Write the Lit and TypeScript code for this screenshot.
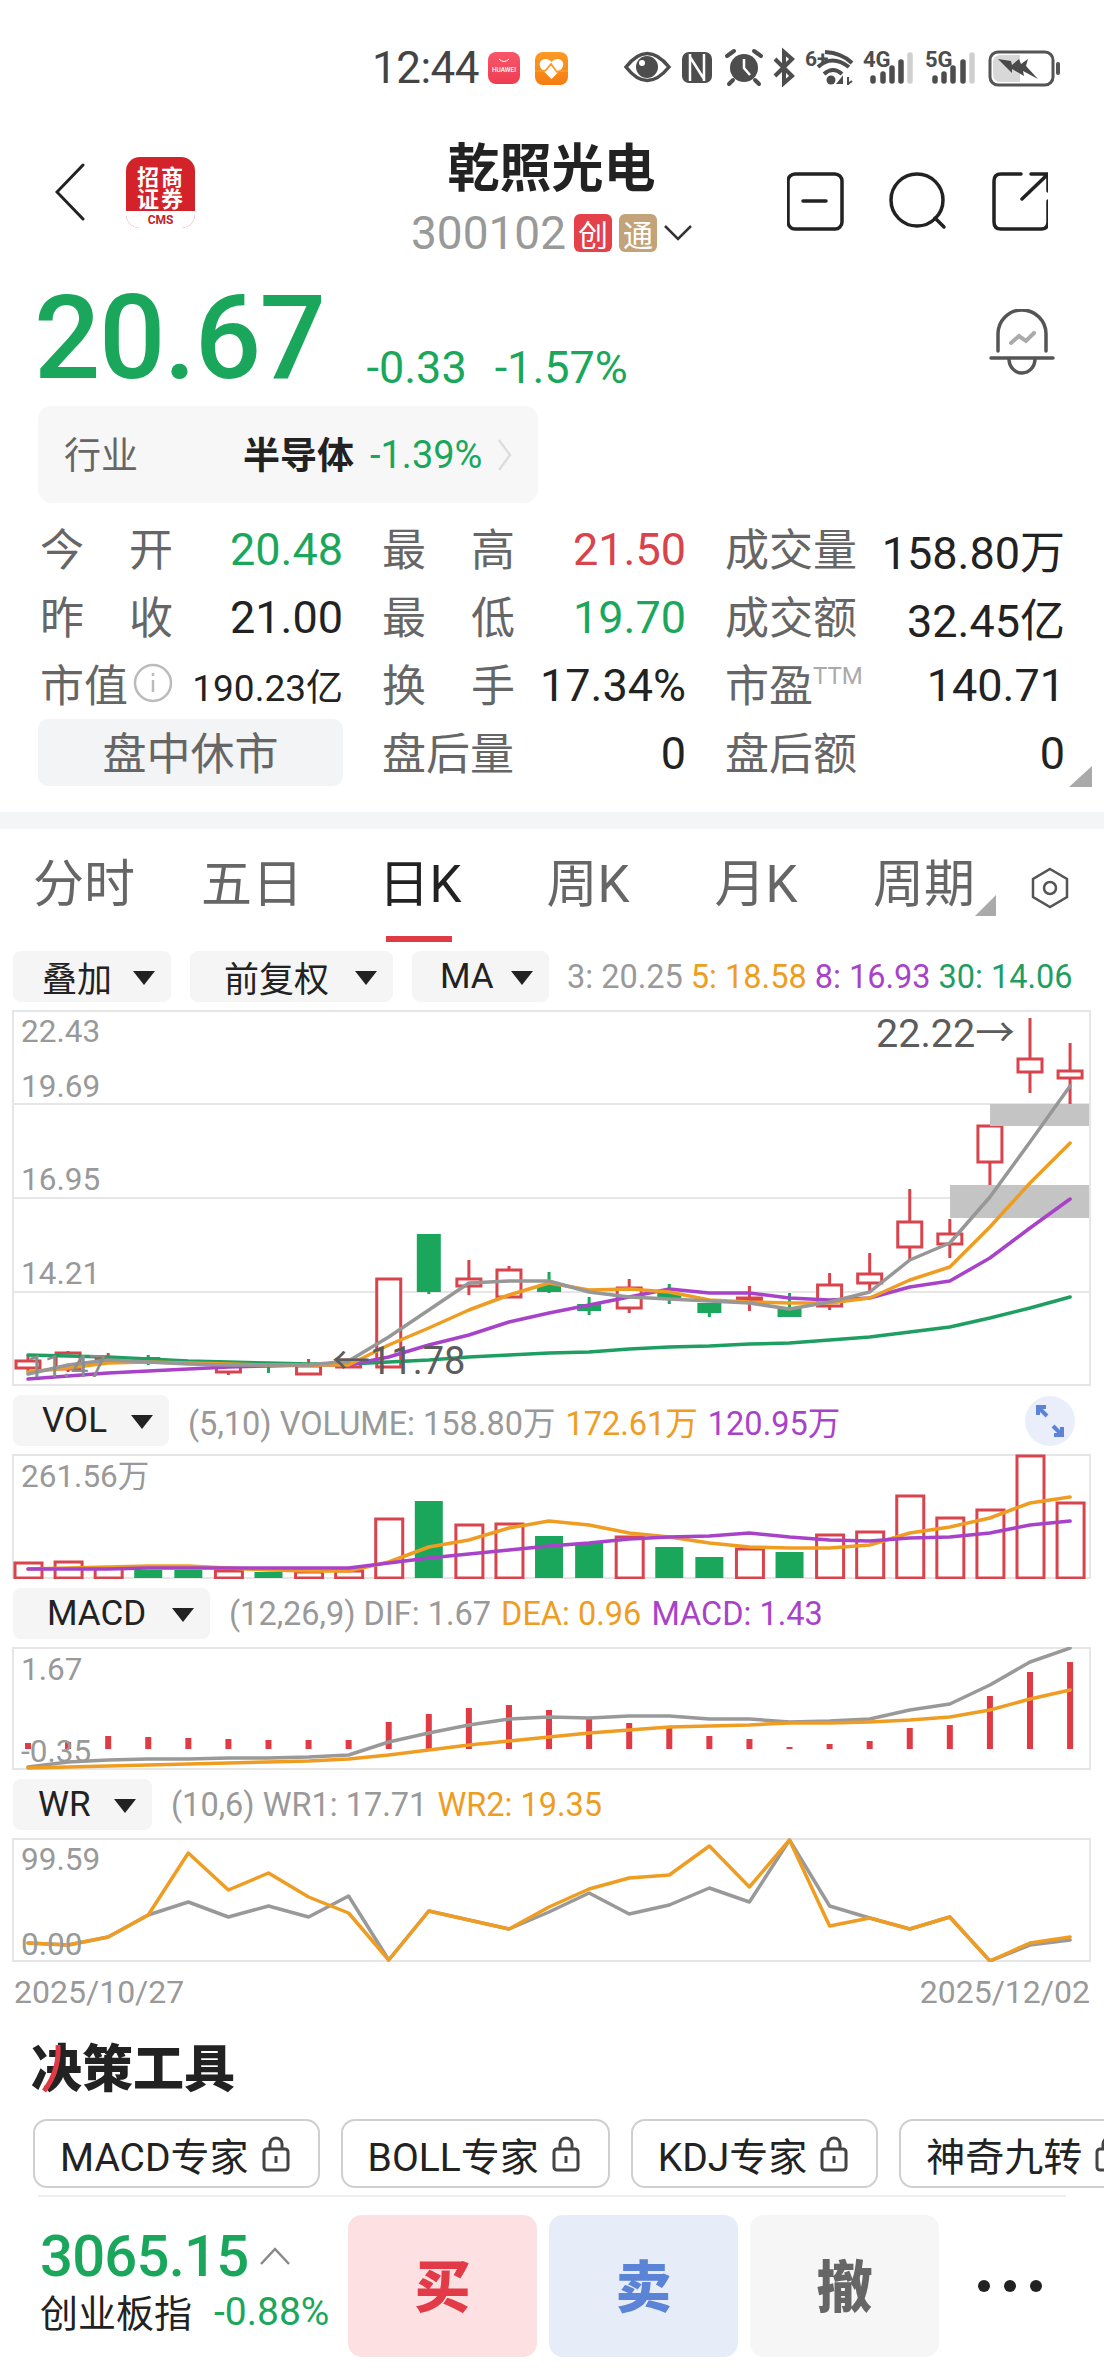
import { LitElement, html, svg, css } from "lit";
import { customElement } from "lit/decorators.js";

const RED = "#d8434c";
const GREEN = "#1aa75c";
const ORANGE = "#ef9d22";
const PURPLE = "#a843c9";
const MA30 = "#1f9e62";

// x position of the n-th trading day, shared by all four panes
const dayX = (i: number) => 28 + 40.08 * i;

const line = (ys: number[], color: string, width = 3.5) => svg`
  <polyline points=${ys.map((y, i) => `${dayX(i).toFixed(1)},${y}`).join(" ")} fill="none"
    stroke=${color} stroke-width=${width} stroke-linejoin="round" stroke-linecap="round" />`;

// [bodyTop, bodyBottom, wickTop, wickBottom, up]
const candles: [number, number, number, number, boolean][] = [
  [1361, 1368, 1355, 1372, true],
  [1353, 1369, 1351, 1372, true],
  [1358, 1361, 1353, 1362, true],
  [1357, 1364, 1355, 1365, false],
  [1362, 1364, 1360, 1365, false],
  [1364, 1372, 1362, 1375, true],
  [1364, 1366, 1363, 1373, false],
  [1366, 1374, 1359, 1375, true],
  [1360, 1367, 1359, 1368, true],
  [1279, 1367, 1279, 1368, true],
  [1234, 1292, 1234, 1294, false],
  [1279, 1286, 1260, 1295, true],
  [1270, 1297, 1266, 1297, true],
  [1285, 1292, 1272, 1293, false],
  [1304, 1311, 1297, 1315, false],
  [1288, 1308, 1279, 1313, true],
  [1293, 1298, 1284, 1304, false],
  [1303, 1313, 1303, 1317, false],
  [1298, 1301, 1286, 1311, true],
  [1308, 1317, 1293, 1317, false],
  [1285, 1306, 1273, 1310, true],
  [1274, 1283, 1253, 1293, true],
  [1222, 1247, 1189, 1260, true],
  [1234, 1244, 1219, 1258, true],
  [1126, 1162, 1126, 1185, true],
  [1059, 1072, 1018, 1093, true],
  [1071, 1078, 1043, 1104, true],
];

const ma3 = [1374, 1365, 1360, 1362, 1364, 1365, 1365, 1365, 1361, 1337, 1310, 1283, 1281, 1281, 1292, 1297, 1299, 1301, 1303, 1309, 1302, 1292, 1260, 1243, 1197, 1142, 1086];
const ma5 = [1372, 1368, 1363, 1362, 1363, 1364, 1365, 1365, 1365, 1345, 1328, 1310, 1295, 1283, 1290, 1289, 1292, 1300, 1302, 1303, 1303, 1298, 1280, 1267, 1227, 1183, 1143];
const ma8 = [1379, 1376, 1373, 1371, 1369, 1367, 1366, 1365, 1365, 1357, 1345, 1335, 1322, 1313, 1305, 1297, 1289, 1293, 1293, 1298, 1300, 1298, 1287, 1281, 1258, 1228, 1199];
const ma30 = [1355, 1356, 1357, 1359, 1361, 1362, 1363, 1364, 1364, 1362, 1360, 1357, 1355, 1353, 1352, 1349, 1347, 1346, 1344, 1343, 1340, 1337, 1332, 1327, 1318, 1308, 1297];

const volTops = [1563, 1562, 1568, 1570, 1570, 1571, 1572, 1572, 1571, 1519, 1501, 1525, 1524, 1536, 1543, 1537, 1547, 1557, 1549, 1552, 1535, 1532, 1496, 1518, 1510, 1456, 1503];
const volUp = [1, 1, 1, 0, 0, 1, 0, 1, 1, 1, 0, 1, 1, 0, 0, 1, 0, 0, 1, 0, 1, 1, 1, 1, 1, 1, 1];
const vol5 = [1569, 1568, 1567, 1566, 1566, 1568, 1570, 1571, 1571, 1562, 1547, 1540, 1528, 1521, 1525, 1533, 1537, 1543, 1547, 1548, 1548, 1545, 1533, 1527, 1518, 1503, 1497];
const vol10 = [1569, 1569, 1569, 1568, 1568, 1568, 1568, 1568, 1568, 1563, 1558, 1554, 1550, 1546, 1543, 1539, 1537, 1536, 1533, 1537, 1540, 1541, 1538, 1537, 1533, 1525, 1521];

const macdTops = [1743, 1742, 1736, 1737, 1738, 1739, 1740, 1740, 1740, 1722, 1714, 1708, 1705, 1710, 1718, 1723, 1728, 1736, 1739, 1747, 1744, 1741, 1728, 1725, 1696, 1672, 1662];
const dif = [1767, 1762, 1760, 1759, 1759, 1758, 1758, 1757, 1755, 1742, 1733, 1725, 1719, 1717, 1718, 1716, 1716, 1719, 1719, 1722, 1721, 1719, 1710, 1704, 1685, 1662, 1648];
const dea = [1768, 1767, 1766, 1765, 1764, 1763, 1762, 1761, 1759, 1755, 1750, 1745, 1741, 1737, 1733, 1730, 1727, 1726, 1725, 1723, 1723, 1722, 1720, 1717, 1710, 1699, 1690];

const wr1 = [1943, 1945, 1937, 1915, 1902, 1917, 1906, 1917, 1896, 1960, 1911, 1920, 1929, 1912, 1893, 1914, 1905, 1888, 1902, 1840, 1906, 1918, 1929, 1917, 1961, 1945, 1940];
const wr2 = [1943, 1945, 1937, 1915, 1853, 1890, 1873, 1897, 1913, 1960, 1911, 1920, 1929, 1907, 1889, 1878, 1875, 1846, 1887, 1840, 1926, 1918, 1929, 1917, 1961, 1943, 1937];

const frame = (top: number, bottom: number) => svg`
  <rect x="13" y=${top} width="1077" height=${bottom - top} fill="none" stroke="#e6e6e6" stroke-width="2" />`;

const axisLabel = (y: number, text: string) => svg`<text class="axis" x="21" y=${y}>${text}</text>`;

const pick = (label: string, width: number, inset: number) =>
  html`<div class="pick" style="width:${width}px;padding-left:${inset}px">${label}</div>`;

@customElement("app-root")
export class AppRoot extends LitElement {
  static styles = css`
    :host {
      display: block;
      width: 1104px;
      height: 2376px;
      overflow: hidden;
      background: #fff;
      color: #222;
      font-family: Roboto, "Noto Sans CJK SC", sans-serif;
    }
    svg {
      display: block;
    }
    text {
      font-family: Roboto, "Noto Sans CJK SC", sans-serif;
    }

    .status {
      height: 136px;
      display: flex;
      align-items: center;
      padding-left: 372px;
      box-sizing: border-box;
    }
    .time {
      font-size: 44px;
      color: #444;
      width: 113px;
      letter-spacing: -0.5px;
    }

    .header {
      height: 134px;
      display: grid;
      grid-template-columns: 1fr auto 1fr;
      padding: 0 56px 0 55px;
    }
    .nav {
      display: flex;
      align-items: center;
      gap: 41px;
      height: 112px;
    }
    .name {
      text-align: center;
      font-size: 52px;
      font-weight: 700;
      line-height: 62px;
      padding-top: 3px;
      color: #222;
    }
    .code-row {
      display: flex;
      align-items: center;
      gap: 7px;
      height: 44px;
      margin-top: 10px;
      font-size: 46px;
      color: #999;
    }
    .badge {
      width: 38px;
      height: 38px;
      border-radius: 6px;
      color: #fff;
      font-size: 30px;
      display: flex;
      align-items: center;
      justify-content: center;
    }
    .badge.chuang {
      background: #e4414b;
      margin-left: 1px;
    }
    .badge.tong {
      background: #c2a37a;
    }
    .actions {
      display: flex;
      justify-content: flex-end;
      padding-top: 36px;
    }

    .quote {
      height: 136px;
      display: flex;
      padding-left: 34px;
      color: #1aa75c;
    }
    .last {
      font-size: 117px;
      font-weight: 500;
      line-height: 136px;
      letter-spacing: -1.6px;
    }
    .changes {
      display: flex;
      gap: 28px;
      font-size: 45px;
      margin-left: 42px;
      padding-top: 74px;
      height: 48px;
      line-height: 48px;
    }
    .bell {
      margin-left: auto;
      padding: 39px 49px 0 0;
    }

    .industry {
      width: 500px;
      height: 97px;
      margin-left: 38px;
      box-sizing: border-box;
      padding: 0 26px;
      background: #f7f7f7;
      border-radius: 14px;
      display: flex;
      align-items: center;
      font-size: 37px;
    }
    .industry-label {
      color: #666;
      width: 179px;
      margin-bottom: 4px;
    }
    .industry-name {
      font-weight: 700;
      color: #222;
      width: 127px;
      margin-bottom: 4px;
    }
    .industry-pct {
      font-size: 38px;
      color: #1aa75c;
      width: 128px;
    }

    .stats {
      position: relative;
      margin-top: 12px;
      padding: 0 0 0 40px;
      display: grid;
      grid-template-columns: 303px 304px 340px;
      column-gap: 39px;
      grid-auto-rows: 68px;
    }
    .cell {
      display: flex;
      align-items: center;
      justify-content: space-between;
      font-size: 45px;
    }
    .cell-label {
      width: 133px;
      display: flex;
      justify-content: space-between;
      margin-bottom: 5px;
      font-size: 44px;
      color: #666;
      white-space: nowrap;
    }
    .up {
      color: #d8434c;
    }
    .down {
      color: #1aa75c;
    }
    .cap-value {
      font-size: 37px;
    }
    .ttm {
      font-size: 24px;
      color: #aaa;
      margin: -14px 0 0 0;
    }
    .label-inline {
      display: flex;
      align-items: center;
    }
    .info {
      margin-left: 3px;
    }
    .session {
      height: 67px;
      margin-left: -2px;
      background: #f3f4f6;
      border-radius: 10px;
      display: flex;
      align-items: center;
      justify-content: center;
      padding-bottom: 4px;
      box-sizing: border-box;
      font-size: 44px;
      color: #666;
    }
    .corner {
      position: absolute;
      right: 12px;
      bottom: 0;
      width: 23px;
      height: 21px;
      background: #aaa;
      clip-path: polygon(100% 0, 100% 100%, 0 100%);
    }

    .sep {
      height: 17px;
      margin-top: 25px;
      background: #f4f5f7;
    }

    .tabs {
      display: flex;
      align-items: flex-start;
      height: 113px;
      font-size: 51px;
      color: #666;
    }
    .tab {
      position: relative;
      width: 168px;
      height: 113px;
      text-align: center;
      line-height: 112px;
    }
    .tab.active {
      color: #222;
    }
    .tab.active::after {
      content: "";
      position: absolute;
      left: 50px;
      bottom: 0;
      width: 66px;
      height: 6px;
      background: #e03a45;
    }
    .tab-tri {
      position: absolute;
      right: 12px;
      bottom: 26px;
      width: 21px;
      height: 21px;
      background: #aaa;
      clip-path: polygon(100% 0, 100% 100%, 0 100%);
    }
    .tab-set {
      margin: 38px 0 0 22px;
    }

    .panes {
      margin-top: 9px;
    }
    .pane {
      margin-bottom: 9px;
    }
    .pane-head {
      display: flex;
      align-items: center;
      height: 51px;
      margin-bottom: 8px;
      padding-left: 13px;
      gap: 19px;
    }
    .pick {
      height: 51px;
      box-sizing: border-box;
      padding-right: 16px;
      background: #f5f5f5;
      border-radius: 8px;
      display: flex;
      align-items: center;
      justify-content: space-between;
      font-size: 35px;
      color: #222;
    }
    .pick::after {
      content: "";
      border-left: 11px solid transparent;
      border-right: 11px solid transparent;
      border-top: 14px solid #222;
      margin-top: 3px;
    }
    .legend {
      display: flex;
      gap: 10px;
      font-size: 32.5px;
      white-space: nowrap;
      color: #999;
    }
    .legend.ma {
      gap: 8px;
      margin-left: -1px;
    }
    .c-orange {
      color: #ef9d22;
    }
    .c-purple {
      color: #a843c9;
    }
    .c-green {
      color: #1f9e62;
    }
    .axis {
      font-size: 31.5px;
      fill: #999;
    }
    .note {
      font-size: 39.5px;
      fill: #5c5c5c;
    }
    .note.low {
      font-size: 38px;
    }
    .expand {
      margin-left: auto;
      margin-right: 29px;
    }

    .dates {
      display: flex;
      justify-content: space-between;
      height: 50px;
      padding: 0 14px;
      font-size: 32px;
      line-height: 43px;
      color: #999;
    }
    .tools-title {
      position: relative;
      height: 98px;
      padding-left: 31px;
      font-size: 51px;
      font-weight: 900;
      line-height: 98px;
      color: #222;
    }
    .title-mark {
      position: absolute;
      left: 41px;
      top: 24px;
    }
    .chips {
      display: flex;
      gap: 21px;
      padding-left: 33px;
      overflow: hidden;
    }
    .chip {
      flex: none;
      height: 69px;
      box-sizing: border-box;
      border: 2px solid #cfcfcf;
      border-radius: 14px;
      padding: 0 28px 0 25px;
      display: flex;
      align-items: center;
      gap: 13px;
      font-size: 39px;
      color: #222;
    }
    .divider {
      height: 2px;
      margin: 7px 38px 0;
      background: #eeeeee;
    }

    .trade {
      display: flex;
      margin-top: 18px;
      padding-left: 40px;
    }
    .index {
      width: 308px;
    }
    .index-top {
      display: flex;
      align-items: center;
      gap: 12px;
      height: 60px;
      margin-top: 11px;
      font-size: 58px;
      font-weight: 500;
      letter-spacing: -0.8px;
      color: #1aa75c;
    }
    .index-bottom {
      display: flex;
      align-items: center;
      gap: 22px;
      height: 40px;
      margin-top: 4px;
      font-size: 38px;
      color: #222;
    }
    .index-pct {
      font-size: 39px;
      color: #1aa75c;
      margin-top: 4px;
    }
    .order {
      width: 189px;
      height: 142px;
      margin-right: 12px;
      padding-bottom: 8px;
      box-sizing: border-box;
      border-radius: 14px;
      display: flex;
      align-items: center;
      justify-content: center;
      font-size: 56px;
      font-weight: 900;
    }
    .buy {
      background: #fde0e2;
      color: #e23b47;
    }
    .sell {
      background: #e6ecf8;
      color: #5b83d6;
    }
    .cancel {
      background: #f6f6f6;
      color: #666;
    }
    .more {
      display: flex;
      align-items: center;
      gap: 14px;
      margin-left: 27px;
    }
    .more i {
      width: 12px;
      height: 12px;
      border-radius: 50%;
      background: #222;
    }
  `;

  private statusIcons() {
    return html`<svg width="580" height="56" viewBox="485 40 580 56">
      <defs>
        <linearGradient id="hw" x1="0" y1="0" x2="0" y2="1">
          <stop offset="0" stop-color="#f9566a" />
          <stop offset="1" stop-color="#ee3c50" />
        </linearGradient>
        <linearGradient id="hl" x1="0" y1="0" x2="0" y2="1">
          <stop offset="0" stop-color="#fb9a24" />
          <stop offset="1" stop-color="#f57d12" />
        </linearGradient>
      </defs>
      <rect x="488" y="52" width="32" height="32" rx="8" fill="url(#hw)" />
      <path d="M499 59q5 5 10 0" fill="none" stroke="#fff" stroke-width="1" />
      <text x="504" y="72" text-anchor="middle" font-size="6.500" font-weight="500" fill="#fff">HUAWEI</text>
      <rect x="535" y="52" width="33" height="33" rx="8" fill="url(#hl)" />
      <path d="M551.500 79l-10-10c-6-7 4-14 10-7 6-7 16 0 10 7z" fill="#fff" />
      <path d="M535 71h9l2-1 5-6 6 8 3-1h8" fill="none" stroke="#fb9a24" stroke-width="1.800" />

      <path d="M626 67q21-27 43 0q-22 27-43 0z" fill="none" stroke="#4d4d4d" stroke-width="3.500" />
      <circle cx="647" cy="67" r="11" fill="#4d4d4d" />
      <circle cx="642" cy="63" r="3" fill="#fff" />

      <rect x="682" y="52" width="30" height="31" rx="7" fill="#4d4d4d" />
      <path d="M690 54V81M690 57l14 22M704 54V81" fill="none" stroke="#fff" stroke-width="2.500" />

      <circle cx="744" cy="68" r="14" fill="#4d4d4d" />
      <path d="M744 59v9l6 7" fill="none" stroke="#fff" stroke-width="2.500" />
      <path d="M727 56l7-5M761 56l-7-5M733 80l-4 4M755 80l4 4" stroke="#4d4d4d" stroke-width="4" stroke-linecap="round" />

      <path d="M775 59l17 17-8 7V52l8 7-17 17" fill="none" stroke="#4d4d4d" stroke-width="4" />

      <text x="805" y="66" font-size="21" font-weight="700" fill="#4d4d4d">6+</text>
      <path d="M825 52q17 1 27 11M818 67q14-13 31 0M824 74q9-8 18 0" fill="none" stroke="#4d4d4d" stroke-width="4" />
      <circle cx="831" cy="80" r="4.500" fill="#4d4d4d" />
      <path d="M838 83l4-5v5zM848 77v8M848 84l4-3" stroke="#4d4d4d" stroke-width="2" fill="#4d4d4d" />

      <text x="863" y="67" font-size="22" font-weight="700" fill="#4d4d4d">4G</text>
      <path d="M873 78v3M883 74v7M892 68v13M901 62v19" stroke="#4d4d4d" stroke-width="5.500" stroke-linecap="round" />
      <path d="M910 55v26" stroke="#cfcfcf" stroke-width="5.500" stroke-linecap="round" />

      <text x="925" y="67" font-size="22" font-weight="700" fill="#4d4d4d">5G</text>
      <path d="M935 78v3M944 74v7M953 68v13M963 62v19" stroke="#4d4d4d" stroke-width="5.500" stroke-linecap="round" />
      <path d="M972 55v26" stroke="#cfcfcf" stroke-width="5.500" stroke-linecap="round" />

      <rect x="990" y="52" width="63" height="33" rx="8" fill="#fff" stroke="#555" stroke-width="3" />
      <path d="M993 63q0-8 8-8h19v27h-19q-8 0-8-8z" fill="#d8d8d8" />
      <rect x="1056" y="62" width="4" height="13" rx="2" fill="#555" />
      <path d="M998 59l13 2 1 4 7-6 2 5 7-5-2 7 12 13-15-8 1 5-12-7 0 4z" fill="#4a4a4a" />
    </svg>`;
  }

  private logo() {
    return html`<svg width="69" height="71" viewBox="0 0 69 71">
      <clipPath id="lg"><rect width="69" height="71" rx="14" /></clipPath>
      <g clip-path="url(#lg)">
        <rect width="69" height="71" fill="#d4222a" />
        <rect y="54" width="69" height="17" fill="#fff" />
      </g>
      <text x="35" y="28" text-anchor="middle" font-size="22" letter-spacing="2" font-weight="700" fill="#fff">招商</text>
      <text x="35" y="50" text-anchor="middle" font-size="22" letter-spacing="2" font-weight="700" fill="#fff">证券</text>
      <text x="34.500" y="67" text-anchor="middle" font-size="12" font-weight="700" fill="#c3242b">CMS</text>
    </svg>`;
  }

  private headerActions() {
    return html`<svg width="261" height="60" viewBox="787 170 261 60" fill="none" stroke="#222" stroke-width="3.500" stroke-linecap="round">
      <rect x="788" y="172" width="54" height="55" rx="7" />
      <path d="M803 199h23" />
      <circle cx="917" cy="198" r="26" />
      <path d="M935 216l9 9" />
      <path d="M1021 172h-20q-7 0-7 7v41q0 7 7 7h40q7 0 7-7v-21M1031 172h17v17M1047 173l-25 24" />
    </svg>`;
  }

  private bell() {
    return html`<svg width="66" height="66" viewBox="987 308 66 66" fill="none" stroke-linecap="round">
      <path d="M996 350v-17a24 24 0 0 1 48 0v17" stroke="#555" stroke-width="3.500" />
      <path d="M989 357h62" stroke="#555" stroke-width="3.500" />
      <path d="M1007 358a13 14 0 0 0 26 0" stroke="#555" stroke-width="3.500" />
      <path d="M1009 342l8-7 7 5 8-8" stroke="#aaa" stroke-width="4" />
    </svg>`;
  }

  private priceChart() {
    return html`<svg width="1104" height="376" viewBox="0 1010 1104 376">
      ${frame(1011, 1385)}
      <path d="M14 1104H1089M14 1198H1089M14 1292H1089" stroke="#e6e6e6" stroke-width="2" />
      ${axisLabel(1042, "22.43")}${axisLabel(1097, "19.69")}${axisLabel(1190, "16.95")}${axisLabel(1284, "14.21")}
      ${candles.map(([top, bottom, wickTop, wickBottom, up], i) => {
        const x = dayX(i);
        const color = up ? RED : GREEN;
        return svg`
          <path d="M${x} ${wickTop}V${top}M${x} ${bottom}V${wickBottom}" stroke=${color} stroke-width="3" />
          ${up
            ? svg`<rect x=${x - 12} y=${top} width="24" height=${bottom - top} fill="#fff" stroke=${color} stroke-width="3" />`
            : svg`<rect x=${x - 12} y=${top} width="24" height=${bottom - top} fill=${color} />`}`;
      })}
      <rect x="990" y="1104" width="99" height="22" fill="#c4c4c4" />
      <rect x="950" y="1185" width="139" height="33" fill="#c4c4c4" />
      ${line(ma30, MA30)}${line(ma8, PURPLE)}${line(ma5, ORANGE)}${line(ma3, "#979797")}
      <text class="note" x="876" y="1047">22.22→</text>
      <text class="note low" x="332" y="1374">←11.78</text>
      <text x="27" y="1377" font-size="31.500" fill="#8c8c8c">11.47</text>
    </svg>`;
  }

  private volumeChart() {
    return html`<svg width="1104" height="125" viewBox="0 1454 1104 125">
      ${frame(1455, 1578)}
      ${axisLabel(1487, "261.56万")}
      ${volTops.map((top, i) => {
        const x = dayX(i);
        return volUp[i]
          ? svg`<rect x=${x - 13} y=${top} width="27" height=${1578 - top} fill="#fff" stroke=${RED} stroke-width="3" />`
          : svg`<rect x=${x - 14} y=${top} width="28" height=${1578 - top} fill=${GREEN} />`;
      })}
      ${line(vol5, ORANGE)}${line(vol10, PURPLE)}
    </svg>`;
  }

  private macdChart() {
    return html`<svg width="1104" height="123" viewBox="0 1647 1104 123">
      ${frame(1648, 1769)}
      ${macdTops.map((top, i) => svg`<rect x=${dayX(i) - 3} y=${top} width="6" height=${1749 - top} fill="#e03a45" />`)}
      ${line(dif, "#999")}${line(dea, ORANGE)}
      ${axisLabel(1680, "1.67")}${axisLabel(1762, "-0.35")}
    </svg>`;
  }

  private wrChart() {
    return html`<svg width="1104" height="124" viewBox="0 1838 1104 124">
      ${frame(1839, 1961)}
      ${line(wr1, "#999")}${line(wr2, ORANGE)}
      ${axisLabel(1870, "99.59")}${axisLabel(1955, "0.00")}
    </svg>`;
  }

  private lock() {
    return html`<svg width="28" height="36" viewBox="0 0 28 36" fill="none" stroke="#444" stroke-width="3">
      <rect x="2" y="13" width="24" height="21" rx="3" />
      <path d="M8 13V8a6 6 0 0 1 12 0v5" />
      <path d="M14 20v7" />
    </svg>`;
  }

  render() {
    const tabs = ["分时", "五日", "日K", "周K", "月K"];
    const chips = ["MACD专家", "BOLL专家", "KDJ专家", "神奇九转"];
    return html`
      <div class="status">
        <span class="time">12:44</span>
        ${this.statusIcons()}
      </div>

      <div class="header">
        <div class="nav">
          <svg width="30" height="58" viewBox="0 0 30 58" fill="none" stroke="#222" stroke-width="3" stroke-linecap="round">
            <path d="M28 2L2 29l26 27" />
          </svg>
          ${this.logo()}
        </div>
        <div>
          <div class="name">乾照光电</div>
          <div class="code-row">
            <span>300102</span>
            <span class="badge chuang">创</span>
            <span class="badge tong">通</span>
            <svg width="28" height="16" viewBox="0 0 28 16" fill="none" stroke="#333" stroke-width="2.500"><path d="M1 1l13 13L27 1" /></svg>
          </div>
        </div>
        <div class="actions">${this.headerActions()}</div>
      </div>

      <div class="quote">
        <span class="last">20.67</span>
        <div class="changes"><span>-0.33</span><span>-1.57%</span></div>
        <div class="bell">${this.bell()}</div>
      </div>

      <div class="industry">
        <span class="industry-label">行业</span>
        <span class="industry-name">半导体</span>
        <span class="industry-pct">-1.39%</span>
        <svg width="14" height="34" viewBox="0 0 14 34" fill="none" stroke="#ddd" stroke-width="2.500"><path d="M1 2l11 15L1 32" /></svg>
      </div>

      <div class="stats">
        <div class="cell"><span class="cell-label"><span>今</span><span>开</span></span><span class="down">20.48</span></div>
        <div class="cell"><span class="cell-label"><span>最</span><span>高</span></span><span class="up">21.50</span></div>
        <div class="cell"><span class="cell-label">成交量</span><span>158.80万</span></div>

        <div class="cell"><span class="cell-label"><span>昨</span><span>收</span></span><span>21.00</span></div>
        <div class="cell"><span class="cell-label"><span>最</span><span>低</span></span><span class="down">19.70</span></div>
        <div class="cell"><span class="cell-label">成交额</span><span>32.45亿</span></div>

        <div class="cell">
          <span class="cell-label label-inline">
            市值
            <svg class="info" width="40" height="40" viewBox="0 0 40 40" fill="none" stroke="#bbb" stroke-width="2.500">
              <circle cx="20" cy="20" r="18" />
              <path d="M20 17v12M20 10v3" />
            </svg>
          </span>
          <span class="cap-value">190.23亿</span>
        </div>
        <div class="cell"><span class="cell-label"><span>换</span><span>手</span></span><span>17.34%</span></div>
        <div class="cell">
          <span class="cell-label label-inline">市盈<span class="ttm">TTM</span></span>
          <span>140.71</span>
        </div>

        <div class="session">盘中休市</div>
        <div class="cell"><span class="cell-label">盘后量</span><span>0</span></div>
        <div class="cell"><span class="cell-label">盘后额</span><span>0</span></div>
        <span class="corner"></span>
      </div>

      <div class="sep"></div>

      <div class="tabs">
        ${tabs.map((t) => html`<div class="tab ${t === "日K" ? "active" : ""}">${t}</div>`)}
        <div class="tab">周期<span class="tab-tri"></span></div>
        <svg class="tab-set" width="40" height="42" viewBox="0 0 40 42" fill="none" stroke="#555" stroke-width="2.500">
          <path d="M20 2l17 10v18L20 40 3 30V12z" />
          <circle cx="20" cy="21" r="6" />
        </svg>
      </div>

      <div class="panes">
        <div class="pane">
          <div class="pane-head">
            ${pick("叠加", 158, 29)}${pick("前复权", 203, 34)}${pick("MA", 137, 28)}
            <div class="legend ma">
              <span>3: 20.25</span>
              <span class="c-orange">5: 18.58</span>
              <span class="c-purple">8: 16.93</span>
              <span class="c-green">30: 14.06</span>
            </div>
          </div>
          ${this.priceChart()}
        </div>

        <div class="pane">
          <div class="pane-head">
            ${pick("VOL", 156, 29)}
            <div class="legend">
              <span>(5,10) VOLUME: 158.80万</span>
              <span class="c-orange">172.61万</span>
              <span class="c-purple">120.95万</span>
            </div>
            <svg class="expand" width="50" height="50" viewBox="0 0 50 50" fill="none" stroke="#5b83d6" stroke-width="4">
              <circle cx="25" cy="25" r="25" fill="#e9eefa" stroke="none" />
              <path d="M13 11l9 9M13 19v-8h8M37 39l-9-9M37 31v8h-8" />
            </svg>
          </div>
          ${this.volumeChart()}
        </div>

        <div class="pane">
          <div class="pane-head">
            ${pick("MACD", 197, 34)}
            <div class="legend">
              <span>(12,26,9) DIF: 1.67</span>
              <span class="c-orange">DEA: 0.96</span>
              <span class="c-purple">MACD: 1.43</span>
            </div>
          </div>
          ${this.macdChart()}
        </div>

        <div class="pane">
          <div class="pane-head">
            ${pick("WR", 139, 25)}
            <div class="legend">
              <span>(10,6) WR1: 17.71</span>
              <span class="c-orange">WR2: 19.35</span>
            </div>
          </div>
          ${this.wrChart()}
        </div>
      </div>

      <div class="dates"><span>2025/10/27</span><span>2025/12/02</span></div>

      <div class="tools-title">
        决策工具
        <svg class="title-mark" width="20" height="48" viewBox="0 0 20 48" fill="none" stroke="#e03a45" stroke-width="5">
          <path d="M17 0c1 18-3 32-14 46" />
        </svg>
      </div>

      <div class="chips">
        ${chips.map((c) => html`<div class="chip">${c}${this.lock()}</div>`)}
      </div>
      <div class="divider"></div>

      <div class="trade">
        <div class="index">
          <div class="index-top">
            3065.15
            <svg width="30" height="18" viewBox="0 0 30 18" fill="none" stroke="#888" stroke-width="2.500"><path d="M1 17L15 2l14 15" /></svg>
          </div>
          <div class="index-bottom">创业板指<span class="index-pct">-0.88%</span></div>
        </div>
        <div class="order buy">买</div>
        <div class="order sell">卖</div>
        <div class="order cancel">撤</div>
        <div class="more"><i></i><i></i><i></i></div>
      </div>
    `;
  }
}
